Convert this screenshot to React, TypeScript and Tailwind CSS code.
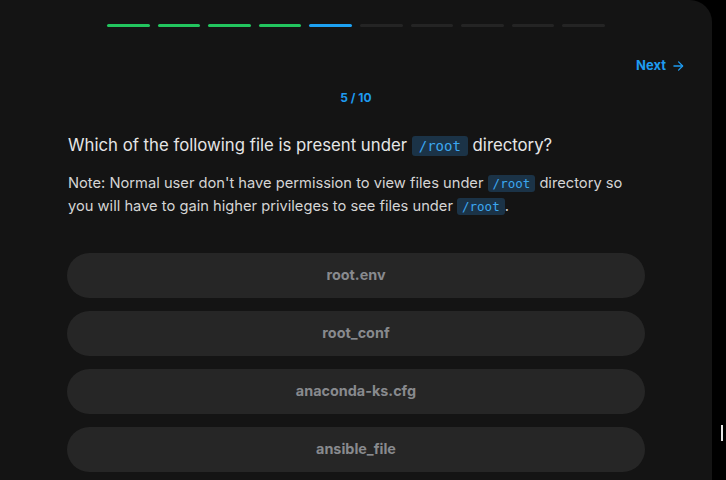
import React from "react";

const Code = ({ children, big }: { children: React.ReactNode; big?: boolean }) => (
  <code
    className={
      big
        ? "rounded-[3px] bg-[#1b3347] px-[7px] py-[2px] text-[14px] text-[#3ba7f0] [font-family:'DejaVu_Sans_Mono',monospace]"
        : "rounded-[3px] bg-[#1b3347] px-[5px] py-[1px] text-[12.5px] text-[#3ba7f0] [font-family:'DejaVu_Sans_Mono',monospace]"
    }
  >
    {children}
  </code>
);

export default function App() {
  const segs = ["g", "g", "g", "g", "b", "n", "n", "n", "n", "n"];
  const options = ["root.env", "root_conf", "anaconda-ks.cfg", "ansible_file"];
  return (
    <div className="relative h-[480px] w-[726px] overflow-hidden bg-black [font-family:Inter,'Noto_Sans',sans-serif]">
      <div className="h-[480px] w-[712px] rounded-tr-[22px] bg-[#141414]">
        <div className="flex justify-center pt-[24px]">
          <div className="flex w-[498px] gap-[8px]">
            {segs.map((s, i) => (
              <div
                key={i}
                className={
                  "h-[3px] flex-1 rounded-full " +
                  (s === "g" ? "bg-[#22c55e]" : s === "b" ? "bg-[#1da1f2]" : "bg-[#242424]")
                }
              />
            ))}
          </div>
        </div>
        <div className="flex justify-end pr-[27px] pt-[29px]">
          <div className="flex items-center gap-[5px] text-[13px] font-bold text-[#1e9bf0]">
            <span>Next</span>
            <svg width="14" height="14" viewBox="0 0 24 24" fill="none" stroke="currentColor" strokeWidth="2.2" strokeLinecap="round" strokeLinejoin="round">
              <path d="M5 12h14" />
              <path d="M13 5l7 7-7 7" />
            </svg>
          </div>
        </div>
        <div className="pt-[13px] text-center text-[12px] font-bold text-[#1e9bf0]">5 / 10</div>
        <div className="mx-auto w-[578px] pt-[26px]">
          <div className="pl-[1px] text-[16.75px] leading-[24px] text-[#e6e6e6]">
            Which of the following file is present under <Code big>/root</Code> directory?
          </div>
          <div className="mt-[14px] pl-[1px] text-[14.7px] leading-[23px] text-[#d4d4d4]">
            Note: Normal user don't have permission to view files under <Code>/root</Code> directory so you will have to gain higher privileges to see files under <Code>/root</Code>.
          </div>
          <div className="mt-[35px] flex flex-col gap-[13px]">
            {options.map((o) => (
              <div
                key={o}
                className="flex h-[45px] items-center justify-center rounded-full bg-[#262626] text-[14.4px] font-bold text-[#888a8e]"
              >
                {o}
              </div>
            ))}
          </div>
        </div>
      </div>
      <div className="absolute left-[721px] top-[425px] h-[16px] w-[2px] bg-[#e5e5e5]" />
    </div>
  );
}
